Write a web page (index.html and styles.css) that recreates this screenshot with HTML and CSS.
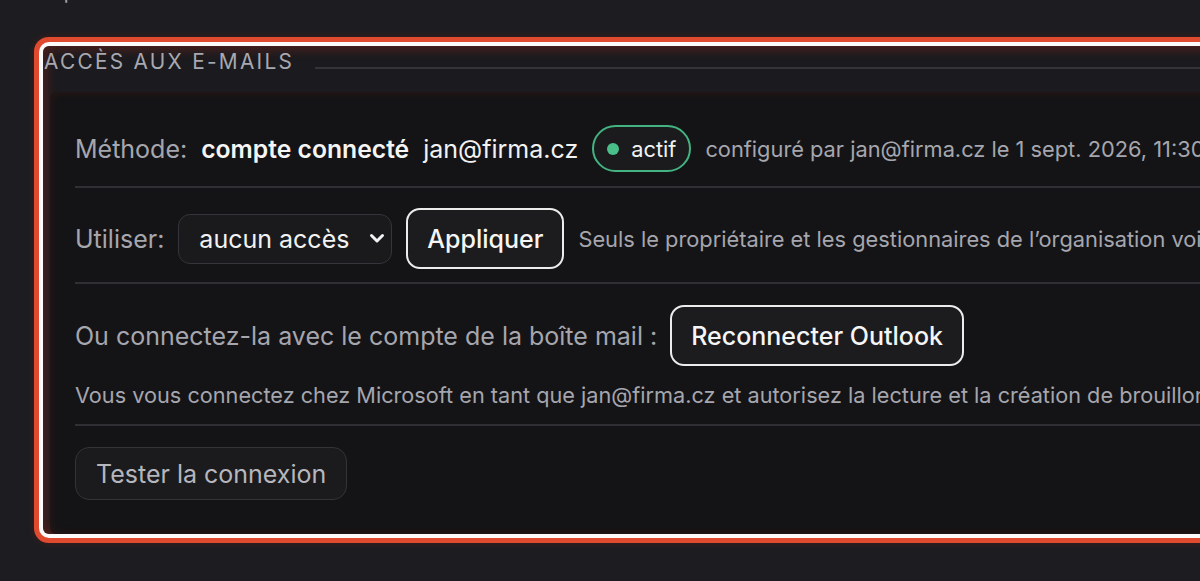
FILE: index.html
```html
<!DOCTYPE html>
<html lang="fr">
<head>
<meta charset="utf-8">
<title>Accès aux e-mails</title>
<link rel="stylesheet" href="styles.css">
</head>
<body>
<div class="page">
  <p class="prev">Ap</p>
  <section class="panel">
    <header class="panel-head">
      <h2 class="panel-title">ACCÈS AUX E-MAILS</h2>
      <span class="panel-rule"></span>
    </header>
    <div class="card">
      <div class="row row-first">
        <span class="label">Méthode:</span>
        <strong class="strong">compte connecté</strong>
        <span class="value">jan@firma.cz</span>
        <span class="badge"><span class="dot"></span>actif</span>
        <span class="muted">configuré par jan@firma.cz le 1 sept. 2026, 11:30</span>
      </div>
      <div class="row row-use">
        <span class="label">Utiliser:</span>
        <div class="select" role="combobox">
          <span>aucun accès</span>
          <svg class="chev" width="16" height="11" viewBox="0 0 16 11"><path d="M2.5 2.5 L8 8 L13.5 2.5" fill="none" stroke="#f2f2f2" stroke-width="3" stroke-linecap="round" stroke-linejoin="round"/></svg>
        </div>
        <button class="btn btn-primary">Appliquer</button>
        <span class="muted">Seuls le propriétaire et les gestionnaires de l’organisation voient cette boîte mail.</span>
      </div>
      <div class="row row-col">
        <div class="line">
          <span class="label">Ou connectez-la avec le compte de la boîte mail :</span>
          <button class="btn btn-primary">Reconnecter Outlook</button>
        </div>
        <p class="note">Vous vous connectez chez Microsoft en tant que jan@firma.cz et autorisez la lecture et la création de brouillons.</p>
      </div>
      <div class="row row-last">
        <button class="btn btn-ghost">Tester la connexion</button>
      </div>
    </div>
  </section>
</div>
</body>
</html>
```

FILE: styles.css
```css
html, body {
  margin: 0;
  padding: 0;
  background: #1d1d21;
  overflow: hidden;
}
body {
  width: 1200px;
  height: 581px;
  font-family: Inter, "Noto Sans", sans-serif;
  color: #f2f2f2;
}
.page {
  padding-left: 43px;
  width: 1400px;
}
.prev {
  margin: -20px 0 0 7px;
  height: 24px;
  font-size: 20px;
  line-height: 24px;
  color: #a6a6ae;
  overflow: hidden;
}
.panel {
  margin-top: 42px;
  width: 1300px;
  height: 488px;
  box-sizing: border-box;
  border-radius: 6px;
  background: #1b1b1f;
  box-shadow: 0 0 0 4px #fbfbfb, 0 0 0 9px #e04a2e, 0 0 6px 10px rgba(120, 30, 20, 0.3), inset 0 0 12px 3px rgba(150, 40, 25, 0.45);
  padding-top: 4px;
}
.panel-head {
  display: flex;
  align-items: flex-end;
  gap: 21px;
  height: 24px;
}
.panel-title {
  margin: 0 0 0 1px;
  font-size: 20.8px;
  line-height: 24px;
  font-weight: 400;
  letter-spacing: 2.3px;
  color: #a8a8b0;
  white-space: nowrap;
}
.panel-rule {
  flex: 1;
  height: 2px;
  background: #343438;
  margin-bottom: 5px;
}
.card {
  margin: 18px 0 0 7px;
  height: 442px;
  box-sizing: border-box;
  background: #141416;
  border-radius: 6px 0 0 6px;
  padding: 12px 0 0 25px;
  box-shadow: inset 0 0 10px rgba(140, 35, 22, 0.22);
}
.row {
  display: flex;
  align-items: center;
  gap: 14px;
  padding: 21px 0 14px;
  border-bottom: 2px solid #303034;
  font-size: 25px;
  white-space: nowrap;
}
.row > * {
  flex-shrink: 0;
}
.row-use {
  padding: 20px 0 13px;
}
.row-col {
  display: block;
  padding-top: 21px;
  padding-bottom: 14px;
}
.row-last {
  border-bottom: none;
}
.line {
  display: flex;
  align-items: center;
  gap: 13px;
}
.line > * {
  flex-shrink: 0;
}
.label {
  color: #a6a6ae;
}
.strong {
  font-size: 24.7px;
  font-weight: 600;
  color: #f5f5f5;
}
.value {
  color: #f2f2f2;
}
.muted {
  font-size: 21.8px;
  color: #a6a6ae;
}
.badge {
  display: inline-flex;
  align-items: center;
  gap: 12px;
  box-sizing: border-box;
  height: 47px;
  padding: 0 13px 0 13px;
  border: 2px solid #43b381;
  border-radius: 24px;
  background: #1b1b1e;
  color: #f2f2f2;
  font-size: 21.8px;
}
.dot {
  width: 12px;
  height: 12px;
  border-radius: 50%;
  background: #49c08a;
}
.select {
  display: flex;
  align-items: center;
  justify-content: space-between;
  box-sizing: border-box;
  width: 214px;
  height: 50px;
  padding: 0 6px 0 20px;
  border: 1.5px solid #34343a;
  border-radius: 12px;
  background: #1a1a1d;
  color: #f2f2f2;
  font-size: 25px;
}
.chev {
  display: block;
}
.btn {
  font-family: inherit;
  font-size: 25px;
  cursor: pointer;
  box-sizing: border-box;
  white-space: nowrap;
}
.btn-primary {
  height: 61px;
  padding: 0 19px;
  border: 2px solid #ececec;
  border-radius: 14px;
  background: #1c1c1f;
  color: #f5f5f5;
  font-weight: 500;
}
.btn-ghost {
  height: 53px;
  padding: 0 20px;
  border: 1.5px solid #333338;
  border-radius: 14px;
  background: #1b1b1e;
  color: #b6b6bd;
  font-weight: 400;
}
.note {
  margin: 14px 0 0;
  font-size: 21.7px;
  line-height: 30px;
  color: #a6a6ae;
}
```
